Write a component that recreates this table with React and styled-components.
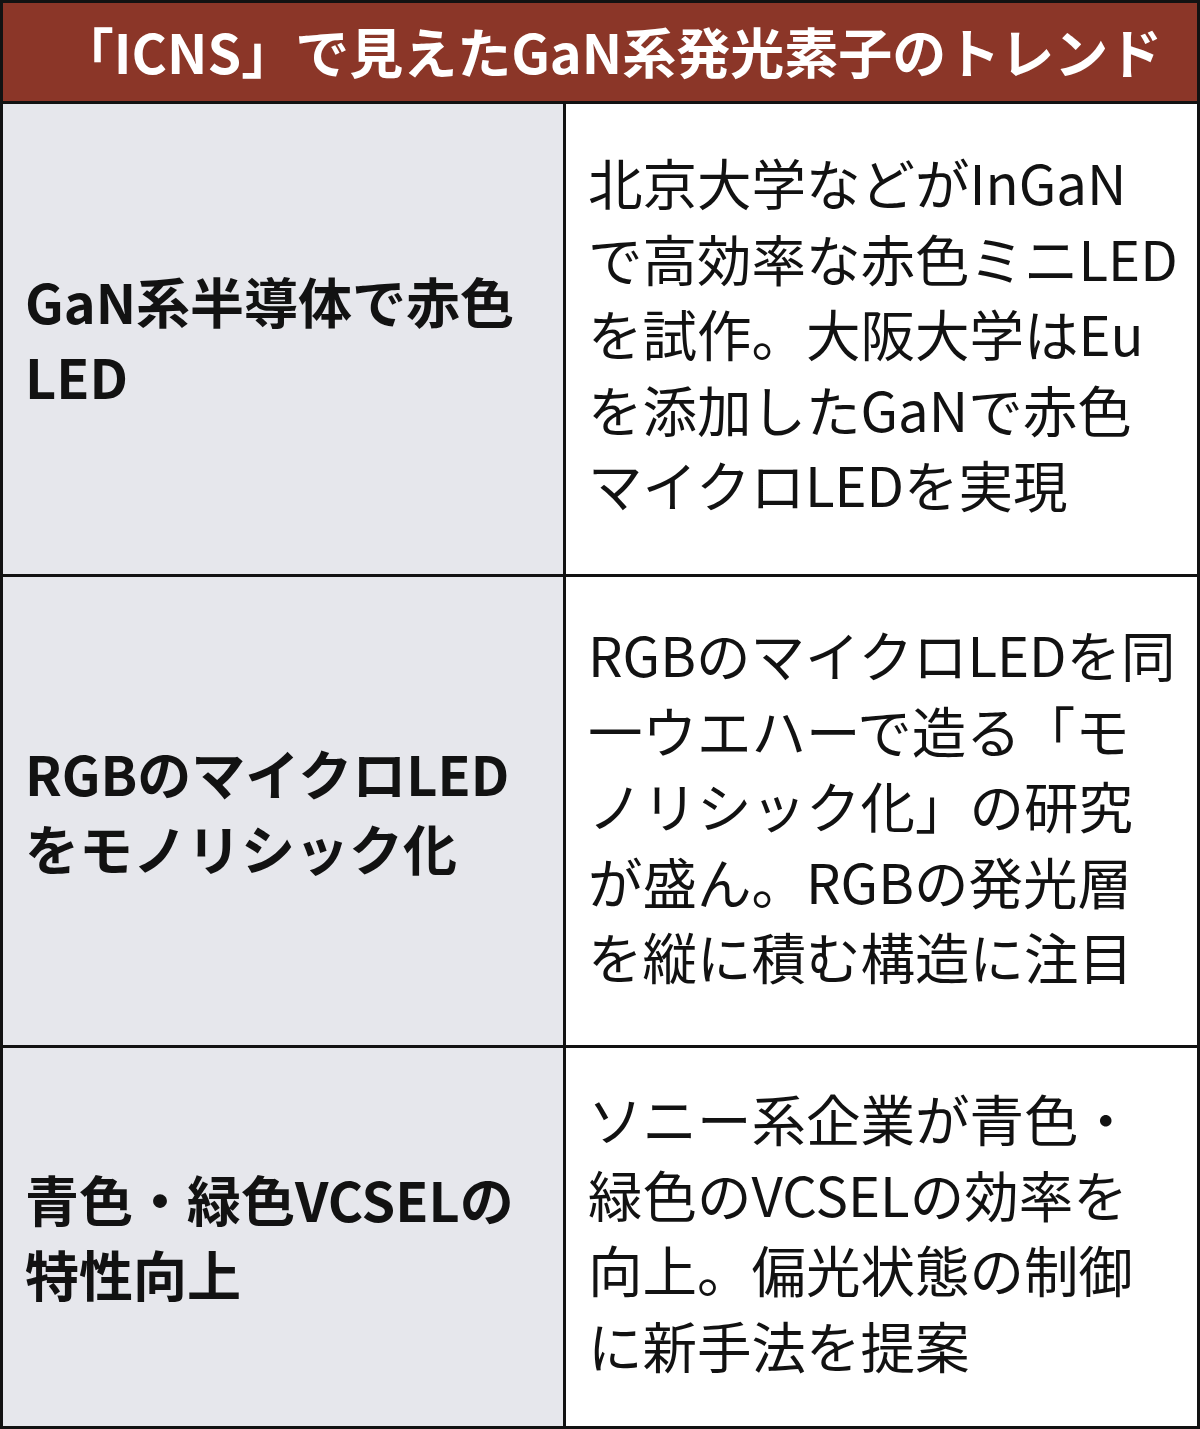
import React from "react";
import styled, { createGlobalStyle } from "styled-components";

const Global = createGlobalStyle`
  html, body { margin: 0; padding: 0; background: #ffffff; }
  body { font-family: "Noto Sans CJK JP", "Noto Sans", sans-serif; }
`;

const Frame = styled.div`
  width: 1200px;
  height: 1429px;
  box-sizing: border-box;
  border: 3px solid #121212;
  background: #121212;
  display: flex;
  flex-direction: column;
  gap: 3px;
`;

const Header = styled.h1`
  margin: 0;
  height: 98px;
  background: #8b3628;
  color: #ffffff;
  font-size: 54px;
  font-weight: 700;
  line-height: 96px;
  text-align: center;
  padding-left: 22px;
  white-space: nowrap;
  letter-spacing: 0;
`;

const Table = styled.div`
  display: grid;
  grid-template-columns: 560px 1fr;
  grid-template-rows: 470px 468px 378px;
  gap: 3px;
`;

const Cell = styled.div`
  display: flex;
  align-items: center;
  box-sizing: border-box;
  padding: 0 0 ${(p) => p.$shift || 0}px 22px;
  background: ${(p) => (p.$head ? "#e6e7ec" : "#ffffff")};
  color: #121212;
  font-size: ${(p) => (p.$head ? 54 : 54.5)}px;
  font-weight: ${(p) => (p.$head ? 700 : 400)};
  line-height: 75.5px;
  overflow: hidden;
`;

const Lines = styled.div`
  display: flex;
  flex-direction: column;
`;

const Line = styled.span`
  white-space: nowrap;
`;

const rows = [
  {
    head: ["GaN系半導体で赤色", "LED"],
    body: [
      "北京大学などがInGaN",
      "で高効率な赤色ミニLED",
      "を試作。大阪大学はEu",
      "を添加したGaNで赤色",
      "マイクロLEDを実現",
    ],
  },
  {
    head: ["RGBのマイクロLED", "をモノリシック化"],
    body: [
      "RGBのマイクロLEDを同",
      "一ウエハーで造る「モ",
      "ノリシック化」の研究",
      "が盛ん。RGBの発光層",
      "を縦に積む構造に注目",
    ],
  },
  {
    head: ["青色・緑色VCSELの", "特性向上"],
    body: [
      "ソニー系企業が青色・",
      "緑色のVCSELの効率を",
      "向上。偏光状態の制御",
      "に新手法を提案",
    ],
  },
];

export default function App() {
  return (
    <>
      <Global />
      <Frame>
        <Header>「ICNS」で見えたGaN系発光素子のトレンド</Header>
        <Table>
          {rows.map((r, i) => (
            <React.Fragment key={i}>
              <Cell $head $shift={2}>
                <Lines>
                  {r.head.map((t, j) => (
                    <Line key={j}>{t}</Line>
                  ))}
                </Lines>
              </Cell>
              <Cell $shift={12}>
                <Lines>
                  {r.body.map((t, j) => (
                    <Line key={j}>{t}</Line>
                  ))}
                </Lines>
              </Cell>
            </React.Fragment>
          ))}
        </Table>
      </Frame>
    </>
  );
}
